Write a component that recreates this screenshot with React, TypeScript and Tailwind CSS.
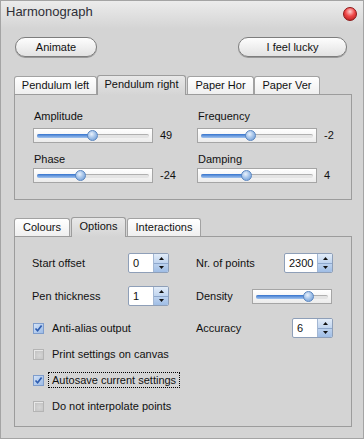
import React from 'react'

type Tab = { label: string; cls: string }

const topTabs: Tab[] = [
  { label: 'Pendulum left', cls: 'w-[83px]' },
  { label: 'Pendulum right', cls: 'w-[89px]' },
  { label: 'Paper Hor', cls: 'w-[67px] ml-[1px]' },
  { label: 'Paper Ver', cls: 'w-[66px]' },
]

const bottomTabs: Tab[] = [
  { label: 'Colours', cls: 'w-[56px]' },
  { label: 'Options', cls: 'w-[55px] ml-[1px]' },
  { label: 'Interactions', cls: 'w-[74px] ml-[1px]' },
]

function TabRow({ tabs, active }: { tabs: Tab[]; active: number }) {
  return (
    <div className="flex h-[19px] items-end">
      {tabs.map((t, i) =>
        i === active ? (
          <div
            key={t.label}
            className={`${t.cls} relative z-10 -mb-px flex h-[20px] items-start justify-center rounded-t-[3px] border border-b-0 border-[#9c9c9c] bg-gradient-to-b from-[#e8e8e8] to-[#d4d4d4] pt-[2px]`}
          >
            {t.label}
          </div>
        ) : (
          <div
            key={t.label}
            className={`${t.cls} flex h-[18px] items-center justify-center rounded-t-[3px] border border-b-0 border-[#a2a2a2] bg-gradient-to-b from-white to-[#efefef]`}
          >
            {t.label}
          </div>
        )
      )}
    </div>
  )
}

// thumb = x of the thumb centre, measured from the slider's left edge
function Slider({ cls, thumb }: { cls: string; thumb: number }) {
  return (
    <div className={`${cls} relative h-[15px] shrink-0 border border-[#a5a5a5] bg-gradient-to-b from-white to-[#ececec]`}>
      <div className="absolute left-[3px] right-[3px] top-[5px] h-[4px] rounded-[2px] border-t border-[#b0b0b0] bg-[#e4e4e4]" />
      <div
        className="absolute left-[3px] top-[5px] h-[4px] rounded-l-[2px] bg-gradient-to-b from-[#3473cd] to-[#a3c4ee]"
        style={{ width: thumb - 4 }}
      />
      <div
        className="absolute top-px h-[11px] w-[11px] rounded-full border border-[#5a86c0] bg-[radial-gradient(circle_at_40%_35%,#eaf2fc_0%,#a7c5ea_45%,#6595d2_100%)]"
        style={{ left: thumb - 6.5 }}
      />
    </div>
  )
}

function Spin({ value, cls }: { value: string; cls: string }) {
  return (
    <div className={`${cls} flex h-[20px] shrink-0 overflow-hidden rounded-[2px] border border-[#8e9fb8] bg-white`}>
      <div className="flex flex-1 items-center pl-[4px] text-[11px]">{value}</div>
      <div className="flex w-[15px] flex-col border-l border-[#a3b7d3] bg-gradient-to-b from-[#e2ecf8] to-[#9fbde5]">
        <div className="flex flex-1 items-center justify-center border-b border-[#8ea8cd]">
          <svg width="5" height="3" viewBox="0 0 5 3">
            <path d="M2.5 0 L5 3 L0 3 Z" fill="#111" />
          </svg>
        </div>
        <div className="flex flex-1 items-center justify-center">
          <svg width="5" height="3" viewBox="0 0 5 3">
            <path d="M0 0 L5 0 L2.5 3 Z" fill="#111" />
          </svg>
        </div>
      </div>
    </div>
  )
}

function Check({ checked, label, focus }: { checked: boolean; label: string; focus?: boolean }) {
  return (
    <div className="flex h-[20px] items-center pl-px">
      {checked ? (
        <div className="flex h-[11px] w-[11px] items-center justify-center border border-[#7f9dcc] bg-gradient-to-br from-[#d3e2f6] to-[#9cbbe6]">
          <svg width="9" height="9" viewBox="0 0 9 9">
            <path d="M1.5 4.5 L3.6 6.8 L7.6 1.6" stroke="#2d5caf" strokeWidth="1.7" fill="none" />
          </svg>
        </div>
      ) : (
        <div className="h-[11px] w-[11px] border border-[#b4b4b4] bg-[radial-gradient(circle_at_60%_60%,#d6d6d6_0%,#bdbdbd_100%)] shadow-[inset_1px_1px_0_#e8e8e8]" />
      )}
      <span
        className={`ml-[4px] flex h-[16px] items-center border px-[3px] ${
          focus ? 'border-dotted border-black' : 'border-transparent'
        }`}
      >
        {label}
      </span>
    </div>
  )
}

function SliderField({ label, value, thumb, second }: { label: string; value: string; thumb: number; second?: boolean }) {
  return (
    <>
      <div className={`pl-px ${second ? 'mt-[10px]' : ''}`}>{label}</div>
      <div className={`flex items-center ${second ? 'mt-[2px]' : 'mt-[5px]'}`}>
        <Slider cls="w-[120px]" thumb={thumb} />
        <span className="ml-[7px]">{value}</span>
      </div>
    </>
  )
}

export default function App() {
  return (
    <div className="flex h-[439px] w-[364px] flex-col overflow-hidden border border-[#a4a4a4] bg-[#d4d4d4] font-['Liberation_Sans',Arial,sans-serif] text-[11px] leading-[13px] text-[#111]">
      {/* title bar */}
      <div className="flex h-[28px] shrink-0 items-start justify-between bg-gradient-to-b from-[#ececec] to-[#d4d4d4] pl-[5px] pr-[6px]">
        <span className="mt-[3px] text-[13px] leading-[15px] text-[#2e2e36]">Harmonograph</span>
        <span className="mt-[6px] h-[14px] w-[14px] rounded-full border border-[#8d1414] bg-[radial-gradient(circle_at_50%_30%,#ffd0d0_0%,#f04848_45%,#a81818_100%)]" />
      </div>

      <div className="mt-[8px] flex justify-between pl-[14px] pr-[16px]">
        <button className="h-[20px] w-[82px] rounded-full border border-[#7d7d7d] bg-gradient-to-b from-[#fdfdfd] to-[#e2e2e2] shadow-[0_1px_0_#9a9a9a]">
          Animate
        </button>
        <button className="h-[20px] w-[109px] rounded-full border border-[#7d7d7d] bg-gradient-to-b from-[#fdfdfd] to-[#e2e2e2] shadow-[0_1px_0_#9a9a9a]">
          I feel lucky
        </button>
      </div>

      {/* pendulum tabs */}
      <div className="ml-[13px] mt-[18px] w-[338px]">
        <TabRow tabs={topTabs} active={1} />
        <div className="grid h-[106px] grid-cols-[164px_1fr] border border-[#9c9c9c] bg-[#d4d4d4] pl-[18px] pt-[15px]">
          <div>
            <SliderField label="Amplitude" value="49" thumb={59} />
            <SliderField label="Phase" value="-24" thumb={47} second />
          </div>
          <div>
            <SliderField label="Frequency" value="-2" thumb={53} />
            <SliderField label="Damping" value="4" thumb={49} second />
          </div>
        </div>
      </div>

      {/* options tabs */}
      <div className="ml-[13px] mt-[17px] w-[338px]">
        <TabRow tabs={bottomTabs} active={1} />
        <div className="h-[191px] border border-[#9c9c9c] bg-[#d4d4d4] pl-[17px] pt-[16px]">
          <div className="flex h-[20px]">
            <div className="flex w-[164px] items-center">
              <span className="w-[96px]">Start offset</span>
              <Spin value="0" cls="w-[41px]" />
            </div>
            <div className="flex items-center">
              <span className="w-[88px]">Nr. of points</span>
              <Spin value="2300" cls="w-[49px]" />
            </div>
          </div>

          <div className="mt-[13px] flex h-[20px]">
            <div className="flex w-[164px] items-center">
              <span className="w-[96px]">Pen thickness</span>
              <Spin value="1" cls="w-[41px]" />
            </div>
            <div className="flex items-center">
              <span className="w-[56px]">Density</span>
              <Slider cls="w-[80px]" thumb={56} />
            </div>
          </div>

          <div className="mt-[12px] flex h-[20px]">
            <div className="w-[164px]">
              <Check checked label="Anti-alias output" />
            </div>
            <div className="flex items-center">
              <span className="w-[96px]">Accuracy</span>
              <Spin value="6" cls="w-[41px]" />
            </div>
          </div>

          <div className="mt-[6px]">
            <Check checked={false} label="Print settings on canvas" />
          </div>
          <div className="mt-[6px]">
            <Check checked label="Autosave current settings" focus />
          </div>
          <div className="mt-[6px]">
            <Check checked={false} label="Do not interpolate points" />
          </div>
        </div>
      </div>
    </div>
  )
}
